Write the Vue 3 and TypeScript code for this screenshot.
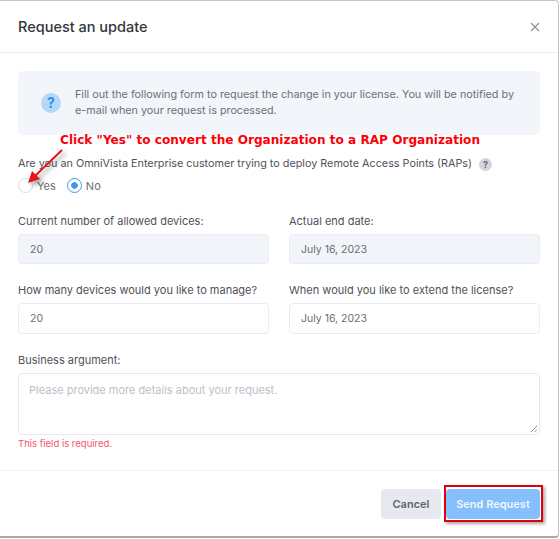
<template>
  <div class="modal">
    <div class="header">
      <h2>Request an update</h2>
      <svg class="close" width="10" height="10" viewBox="0 0 10 10">
        <path d="M1 1l8 8M9 1l-8 8" stroke="#8d939c" stroke-width="1.2" fill="none" />
      </svg>
    </div>

    <div class="body">
      <div class="alert">
        <div class="alert-icon">?</div>
        <p>Fill out the following form to request the change in your license. You will be notified by e-mail when your request is processed.</p>
      </div>

      <div class="question">
        Are you an OmniVista Enterprise customer trying to deploy Remote Access Points (RAPs)
        <span class="help">?</span>
      </div>
      <div class="radios">
        <label class="radio"><span class="dot"></span>Yes</label>
        <label class="radio"><span class="dot on"></span>No</label>
      </div>

      <div class="grid">
        <div v-for="f in fields" :key="f.label" class="field">
          <div class="label">{{ f.label }}</div>
          <div class="input" :class="{ disabled: f.disabled }">{{ f.value }}</div>
        </div>
      </div>

      <div class="label">Business argument:</div>
      <div class="textarea">
        Please provide more details about your request.
        <svg class="grip" width="8" height="8" viewBox="0 0 8 8">
          <path d="M1 7l6-6M4.500 7l2.500-2.500" stroke="#777" stroke-width="0.8" fill="none" />
        </svg>
      </div>
      <div class="error">This field is required.</div>
    </div>

    <div class="footer">
      <button class="btn cancel">Cancel</button>
      <button class="btn send">Send Request</button>
    </div>

    <!-- annotations drawn over the dialog -->
    <div class="note">Click "Yes" to convert the Organization to a RAP Organization</div>
    <svg class="arrow" width="60" height="60" viewBox="0 0 60 60">
      <path d="M42 6L15 32" stroke="#e8141c" stroke-width="2" fill="none" />
      <path d="M8 39l4-12 8 8z" fill="#e8141c" />
    </svg>
    <div class="redbox"></div>
  </div>
</template>

<script setup lang="ts">
const fields = [
  { label: 'Current number of allowed devices:', value: '20', disabled: true },
  { label: 'Actual end date:', value: 'July 16, 2023', disabled: true },
  { label: 'How many devices would you like to manage?', value: '20', disabled: false },
  { label: 'When would you like to extend the license?', value: 'July 16, 2023', disabled: false },
]
</script>

<style>
body {
  margin: 0;
  background: #fff;
}
</style>

<style scoped>
.modal {
  position: relative;
  box-sizing: border-box;
  width: 559px;
  height: 538px;
  border-top: 1px solid #c4c4c4;
  border-right: 1px solid #c4c4c4;
  border-bottom: 2px solid #aaa;
  border-radius: 0 4px 4px 0;
  background: #fff;
  font-family: Inter, "Liberation Sans", sans-serif;
  font-size: 10.5px;
  color: #4e5259;
}

.header {
  height: 52px;
  box-sizing: border-box;
  padding: 0 18px;
  display: flex;
  align-items: center;
  justify-content: space-between;
  border-bottom: 1px solid #e9edf2;
}

h2 {
  margin: 0;
  font-size: 14.5px;
  font-weight: 500;
  color: #33363b;
}

.body {
  height: 418px;
  box-sizing: border-box;
  padding: 18px 18px 0;
  border-bottom: 1px solid #eef0f3;
}

.alert {
  height: 64px;
  box-sizing: border-box;
  padding: 0 18px 0 23px;
  display: flex;
  align-items: center;
  gap: 14px;
  background: #f2f5f9;
  border-radius: 5px;
  color: #6c7079;
}

.alert p {
  margin: 0;
  line-height: 16px;
  font-size: 10.8px;
}

.alert-icon {
  flex: none;
  width: 20px;
  height: 20px;
  border-radius: 50%;
  background: #b4d8f8;
  color: #2f8ee8;
  font-size: 14px;
  font-weight: 700;
  line-height: 20px;
  text-align: center;
}

.question {
  margin-top: 21px;
  height: 16px;
  line-height: 16px;
  display: flex;
  align-items: center;
  gap: 7px;
  white-space: nowrap;
  font-size: 10.8px;
}

.help {
  width: 13px;
  height: 13px;
  border-radius: 50%;
  background: #d3d5dc;
  color: #656a75;
  font-size: 9px;
  font-weight: 700;
  line-height: 13px;
  text-align: center;
}

.radios {
  margin-top: 6px;
  display: flex;
  gap: 11px;
}

.radio {
  display: flex;
  align-items: center;
  gap: 4px;
  font-size: 11px;
  color: #6a6e76;
}

.dot {
  box-sizing: border-box;
  width: 15px;
  height: 15px;
  border: 1px solid #d7dbe2;
  border-radius: 50%;
}

.dot.on {
  border-color: #3f97f0;
  background: radial-gradient(circle, #3f97f0 0 3px, #fff 3.6px);
}

.grid {
  margin-top: 20px;
  display: grid;
  grid-template-columns: 251px 251px;
  column-gap: 20px;
  row-gap: 18px;
}

.label {
  height: 16px;
  line-height: 16px;
  margin-bottom: 5px;
  white-space: nowrap;
  font-size: 11px;
}

.input {
  box-sizing: border-box;
  height: 31px;
  padding: 0 11px;
  line-height: 29px;
  border: 1px solid #e9edf3;
  border-radius: 4px;
  color: #6a6e76;
}

.input.disabled {
  height: 30px;
  background: #f1f4f8;
}

.grid + .label {
  margin-top: 18px;
}

.textarea {
  position: relative;
  box-sizing: border-box;
  width: 522px;
  height: 62px;
  padding: 8px 10px;
  line-height: 16px;
  border: 1px solid #e4e9f1;
  border-radius: 4px;
  color: #bcbfc9;
  font-size: 11px;
}

.grip {
  position: absolute;
  right: 1px;
  bottom: 1px;
}

.error {
  margin-top: 1px;
  line-height: 16px;
  font-size: 9.5px;
  color: #f5536b;
}

.footer {
  height: 66px;
  box-sizing: border-box;
  padding: 18px 18px 0 0;
  display: flex;
  justify-content: flex-end;
  gap: 5px;
}

.btn {
  height: 30px;
  border: 0;
  border-radius: 4px;
  font-family: inherit;
  font-size: 11px;
  font-weight: 600;
}

.cancel {
  width: 60px;
  background: #e6e9ee;
  color: #5f6472;
}

.send {
  width: 94px;
  background: #85bffc;
  color: #eef6ff;
}

.note {
  position: absolute;
  left: 60px;
  top: 132px;
  font-family: "DejaVu Sans", sans-serif;
  font-size: 12.1px;
  font-weight: 700;
  color: #fb0007;
  white-space: nowrap;
}

.arrow {
  position: absolute;
  left: 20px;
  top: 143px;
  filter: drop-shadow(3px 3px 2px rgba(0, 0, 0, 0.35));
}

.redbox {
  position: absolute;
  left: 444px;
  top: 484px;
  width: 99px;
  height: 37px;
  box-sizing: border-box;
  border: 2px solid #e0000b;
  box-shadow: 2px 2px 3px rgba(0, 0, 0, 0.35);
}
</style>
